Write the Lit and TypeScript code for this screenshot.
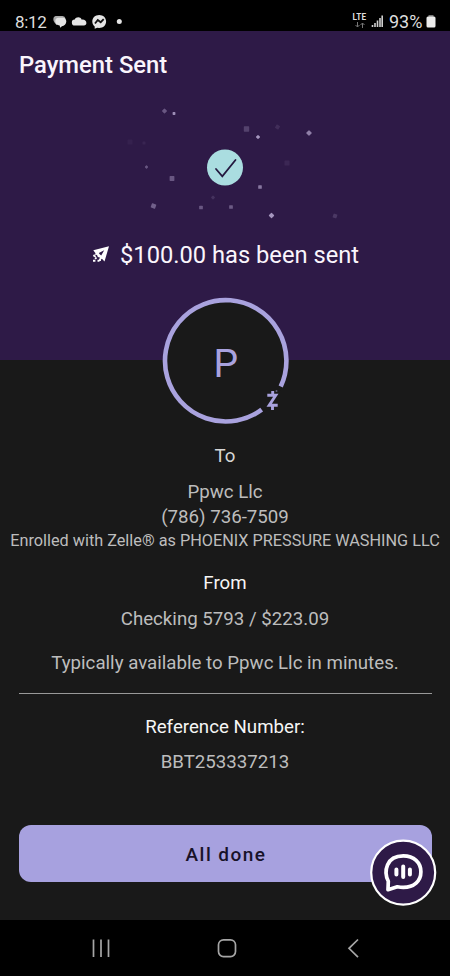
import { LitElement, html, css, svg } from "lit";
import { customElement } from "lit/decorators.js";

// Confetti around the check mark: x, y, size, opacity, rotation
const CONFETTI: [number, number, number, number, number][] = [
  [164.5, 111, 3.8, 0.4, 45], [174, 113.5, 2.8, 0.75, 0],
  [246.5, 129, 5.4, 0.26, 0], [277.5, 127, 4, 0.13, 30],
  [258, 137, 3.2, 0.8, 45], [309, 133, 4.2, 0.65, 45],
  [130, 142, 5, 0.05, 0], [144, 143, 3, 0.08, 0],
  [287, 163, 5, 0.09, 0], [146.5, 167, 2.6, 0.4, 45],
  [172, 178.5, 4.8, 0.4, 0], [260, 187, 3.6, 0.6, 0],
  [213, 197.5, 3, 0.16, 45], [153.5, 206, 4.6, 0.45, 20],
  [201, 207.5, 3.7, 0.4, 0], [231, 207, 3.7, 0.42, 0],
  [271.5, 215.5, 4.1, 0.8, 45], [335, 216, 4, 0.2, 20],
];

@customElement("status-bar")
class StatusBar extends LitElement {
  static styles = css`
    :host { display: flex; justify-content: space-between; height: 31px; box-sizing: border-box;
      padding: 12px 14px 0 15px; background: #000; color: #dedede; font-size: 17px; line-height: 20px; }
    .group { display: flex; align-items: flex-start; }
    .time { width: 38px; letter-spacing: -0.35px; }
    .pct { width: 37px; margin-left: -0.5px; font-size: 18px; letter-spacing: 0; white-space: nowrap; }
    .net { width: 18.5px; font-size: 8.2px; line-height: 9px; font-weight: 700; letter-spacing: 0.2px; padding-top: 1px; }
    .net svg { display: block; margin-left: 2px; }
    svg { display: block; flex: none; }
  `;
  render() {
    return html`
      <div class="group">
        <span class="time">8:12</span>
        <svg width="70" height="19" viewBox="53 12 70 19">
          <path fill="#aaa" d="M55.500 16h7q2.500 0 3 2.500l-9 6.500-2-2.500q-1.300-1.700-1.200-3.500.1-2.700 2.200-3z"/>
          <path fill="#e4e4e4" d="M58.500 17.800h4.500c2 0 3.300 1.500 3.300 3.700 0 2.700-2.100 4.500-4.400 4.700l-1.600 1.600-.7-2.200c-2.500-.7-4.300-1.800-4.300-4.200 0-2.300 1.100-3.600 3.200-3.600z"/>
          <path fill="#e4e4e4" d="M75 25.500a3 3 0 0 1-.3-6c1.100-2.400 5.400-3.500 7.100.2 2.300-.5 4.600 1.100 4.600 3.300 0 1.500-1 2.500-2.400 2.500z"/>
          <path fill="#e4e4e4" d="M99.200 15c4 0 6.900 2.800 6.900 6.500S103.200 28 99.200 28l-2-.3-2.500 1v-2.200c-1.500-1.200-2.400-3-2.400-5 0-3.700 2.900-6.500 6.900-6.500z"/>
          <path fill="none" stroke="#111" stroke-width="1.800" d="M95 23.500l2.800-3.500 2.900 2.200 3-3"/>
          <circle cx="119.300" cy="21.600" r="2.500" fill="#e4e4e4"/>
        </svg>
      </div>
      <div class="group">
        <div class="net">LTE
          <svg width="10" height="6" viewBox="0 0 10 6"><path fill="none" stroke="#777" d="M2.500 0v5M.5 3l2 2 2-2M7.500 6V1M5.500 3l2-2 2 2"/></svg>
        </div>
        <svg width="18.500" height="18" viewBox="371.500 12 18.500 18"><path stroke="#d0d0d0" stroke-width="1.600" d="M373 27v-2M375.500 27v-4M378 27v-6.500M380.500 27v-9M382.700 27V15.500"/></svg>
        <span class="pct">93%</span>
        <svg width="10" height="18" viewBox="426 12 10 18"><path fill="#777" d="M428.500 15h5v2h-5z"/><rect x="426.500" y="16.500" width="9" height="11" rx="1.500" fill="#ececec"/></svg>
      </div>`;
  }
}

@customElement("success-hero")
class SuccessHero extends LitElement {
  static styles = css`
    :host { display: flex; flex-direction: column; height: 329px; background: #2e1a47; color: #faf5fc; }
    h1 { margin: 17px 0 0 19px; font-size: 23.800px; line-height: 34px; font-weight: 500; height: 34px; }
    .burst { display: block; width: 450px; height: 130px; margin-top: 16px; flex: none; }
    .sent { display: flex; align-items: center; height: 34px; margin: 10px 0 0 92px; font-size: 23.700px; line-height: 34px; white-space: nowrap; }
    .sent svg { margin-right: 10px; flex: none; }
  `;
  render() {
    return html`
      <h1>Payment Sent</h1>
      <svg class="burst" viewBox="0 98 450 130">
        ${CONFETTI.map(([x, y, s, o, r]) => svg`<rect x=${x - s / 2} y=${y - s / 2} width=${s} height=${s} rx="0.6" fill="#c3b5dc" opacity=${o} transform="rotate(${r} ${x} ${y})"/>`)}
        <circle cx="225" cy="167.500" r="18" fill="#aadde0"/>
        <path d="M216 169l6.300 7.300L235.500 160" fill="none" stroke="#24193f" stroke-width="1.800" stroke-linecap="round"/>
      </svg>
      <div class="sent">
        <svg width="18" height="18" viewBox="0 0 18 18">
          <path fill="#fff" fill-rule="evenodd" d="M17 .300L1.300 4.200l2.400 3.300-1.700 1 3 .5.800 2 2 .6.600 2.500 1.500-1.300 2.600 2.700zM12.200 4.200L9.200 9.600 7.700 8.300 6.800 6.900z"/>
          <path stroke="#fff" stroke-width="1.900" d="M1.300 9.300l2.400 1.500M4.500 11.500L3.200 13M1 14.700h2.400M5.500 14.700h2M8 12.500v2.500"/>
        </svg>
        <span>$100.00 has been sent</span>
      </div>`;
  }
}

@customElement("payment-details")
class PaymentDetails extends LitElement {
  static styles = css`
    :host { display: flex; flex-direction: column; align-items: center; height: 560px; background: #191919; color: #bdbdbd; text-align: center; }
    .avatar { display: block; position: relative; flex: none; width: 128px; height: 128px; margin-top: -63px; }
    .letter { font-size: 39px; fill: #a9a2de; }
    .line { font-size: 18.700px; line-height: 24px; height: 24px; white-space: nowrap; }
    .label { color: #f5f5f5; }
    .to { margin-top: 19px; color: #d6d6d6; }
    .name { margin-top: 12px; }
    .phone { margin-top: 1px; }
    .enrolled { font-size: 16.250px; }
    .from { margin-top: 18px; }
    .value { margin-top: 12px; }
    .eta { margin-top: 20px; }
    .rule { width: 413px; height: 1px; background: #999; margin-top: 18px; flex: none; }
    .ref { margin-top: 21px; }
    .number { margin-top: 11px; }
    .actions { position: relative; width: 413px; margin-top: 51px; }
    button { display: block; width: 413px; height: 57px; border: 0; border-radius: 12px; background: #a7a1df; color: #181229;
      font: 500 19px Roboto, sans-serif; letter-spacing: 1.45px; padding: 1px 0 0 2px; }
    .chat { position: absolute; left: 350.500px; top: 14px; }
  `;
  render() {
    return html`
      <svg class="avatar" viewBox="161 297 128 128">
        <circle cx="225.300" cy="361" r="62" fill="#191919"/>
        <path d="M280.700 386.500A60.700 60.700 0 1 0 261.700 409.700" fill="none" stroke="#a9a2de" stroke-width="4.600"/>
        <text class="letter" x="225.800" y="376.500" text-anchor="middle">P</text>
        <path d="M267.300 395.300h8.500L269.200 405.300h8.500M272.700 391v4.500M272.500 405.500v4.500" fill="none" stroke="#a9a2de" stroke-width="2.900"/>
        <circle cx="276.500" cy="391" r="1" fill="#625e7d"/>
      </svg>
      <div class="line to">To</div>
      <div class="line name">Ppwc Llc</div>
      <div class="line phone">(786) 736-7509</div>
      <div class="line enrolled">Enrolled with Zelle® as PHOENIX PRESSURE WASHING LLC</div>
      <div class="line label from">From</div>
      <div class="line value">Checking 5793 / $223.09</div>
      <div class="line eta">Typically available to Ppwc Llc in minutes.</div>
      <div class="rule"></div>
      <div class="line label ref">Reference Number:</div>
      <div class="line number">BBT253337213</div>
      <div class="actions">
        <button>All done</button>
        <svg class="chat" width="68" height="68" viewBox="369 839 68 68">
          <circle cx="403.200" cy="872.600" r="32" fill="#2e1a47" stroke="#fff" stroke-width="2.200"/>
          <path d="M388.300 881.300C383.500 871.500 386 855.900 403.300 855.900c10.700 0 17.600 6.700 17.600 15.900 0 9.500-7 15.600-17.600 15.600-2.300 0-4.300-.3-6-.6l-9.300 2.900z" fill="none" stroke="#fff" stroke-width="3.700" stroke-linejoin="round"/>
          <path d="M396.400 869.500v4.900M403.200 866.500v10.500M409.900 869.500v4.900" stroke="#fff" stroke-width="4" stroke-linecap="round"/>
        </svg>
      </div>`;
  }
}

@customElement("nav-bar")
class NavBar extends LitElement {
  static styles = css`
    :host { display: block; height: 56px; background: #000; }
    svg { display: block; }
  `;
  render() {
    return html`
      <svg width="450" height="56" viewBox="0 920 450 56" fill="none" stroke="#a6a6a6" stroke-width="1.700">
        <path d="M93.500 939.500v17.500M101 939.500v17.500M108.500 939.500v17.500"/>
        <rect x="218.500" y="939.800" width="17" height="16.800" rx="5"/>
        <path d="M358 939.500l-9 8.800 9 8.800"/>
      </svg>`;
  }
}

@customElement("app-root")
class AppRoot extends LitElement {
  static styles = css`
    :host { display: flex; flex-direction: column; width: 450px; height: 976px; overflow: hidden; font-family: Roboto, sans-serif; }
  `;
  render() {
    return html`<status-bar></status-bar><success-hero></success-hero><payment-details></payment-details><nav-bar></nav-bar>`;
  }
}
